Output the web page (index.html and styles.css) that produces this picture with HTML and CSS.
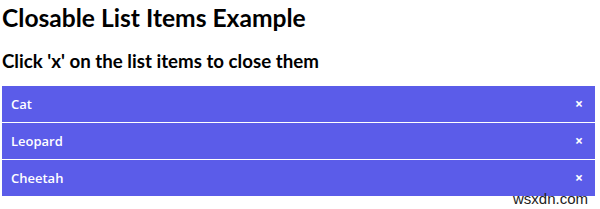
FILE: index.html
```html
<!DOCTYPE html>
<html lang="en">
<head>
    <meta charset="UTF-8">
    <meta name="viewport" content="width=device-width, initial-scale=1.0">
    <title>Closable List Items</title>
    <link rel="stylesheet" href="styles.css">
</head>
<body>
    <h1>Closable List Items Example</h1>
    <h2>Click 'x' on the list items to close them</h2>

    <ul class="lista">
        <li>Cat<span class="cerrar">&times;</span></li>
        <li>Leopard<span class="cerrar">&times;</span></li>
        <li>Cheetah<span class="cerrar">&times;</span></li>
    </ul>

    <div class="marca">wsxdn.com</div>

    <script>
        document.querySelectorAll('.cerrar').forEach(boton => {
            boton.addEventListener('click', function() {
                this.parentElement.style.display = 'none';
            });
        });
    </script>
</body>
</html>
```

FILE: styles.css
```css
body {
    font-family: "Open Sans", "Noto Sans", sans-serif;
    margin: 0;
    padding: 0 5px 0 2px;
    color: #000;
}

h1 {
    font-family: Lato, "Open Sans", sans-serif;
    font-size: 24.6px;
    font-weight: bold;
    margin: 3px 0 0 0;
    line-height: 29px;
}

h2 {
    font-family: Lato, "Open Sans", sans-serif;
    font-size: 18.7px;
    font-weight: bold;
    margin: 17px 0 0 0;
    line-height: 24px;
}

.lista {
    list-style: none;
    margin: 13px 0 0 0;
    padding: 0;
}

.lista li {
    display: flex;
    justify-content: space-between;
    align-items: center;
    background-color: #5b5ce9;
    color: #fff;
    font-size: 13px;
    font-weight: 600;
    line-height: 16px;
    padding: 10px 12px 10px 9px;
    margin-bottom: 1px;
}

.cerrar {
    font-weight: bold;
    font-size: 14px;
    cursor: pointer;
}

.marca {
    font-family: "Liberation Sans", Arial, sans-serif;
    font-size: 15px;
    color: #222;
    text-align: right;
    padding-right: 7px;
    line-height: 10px;
    margin-top: -3px;
}
```
